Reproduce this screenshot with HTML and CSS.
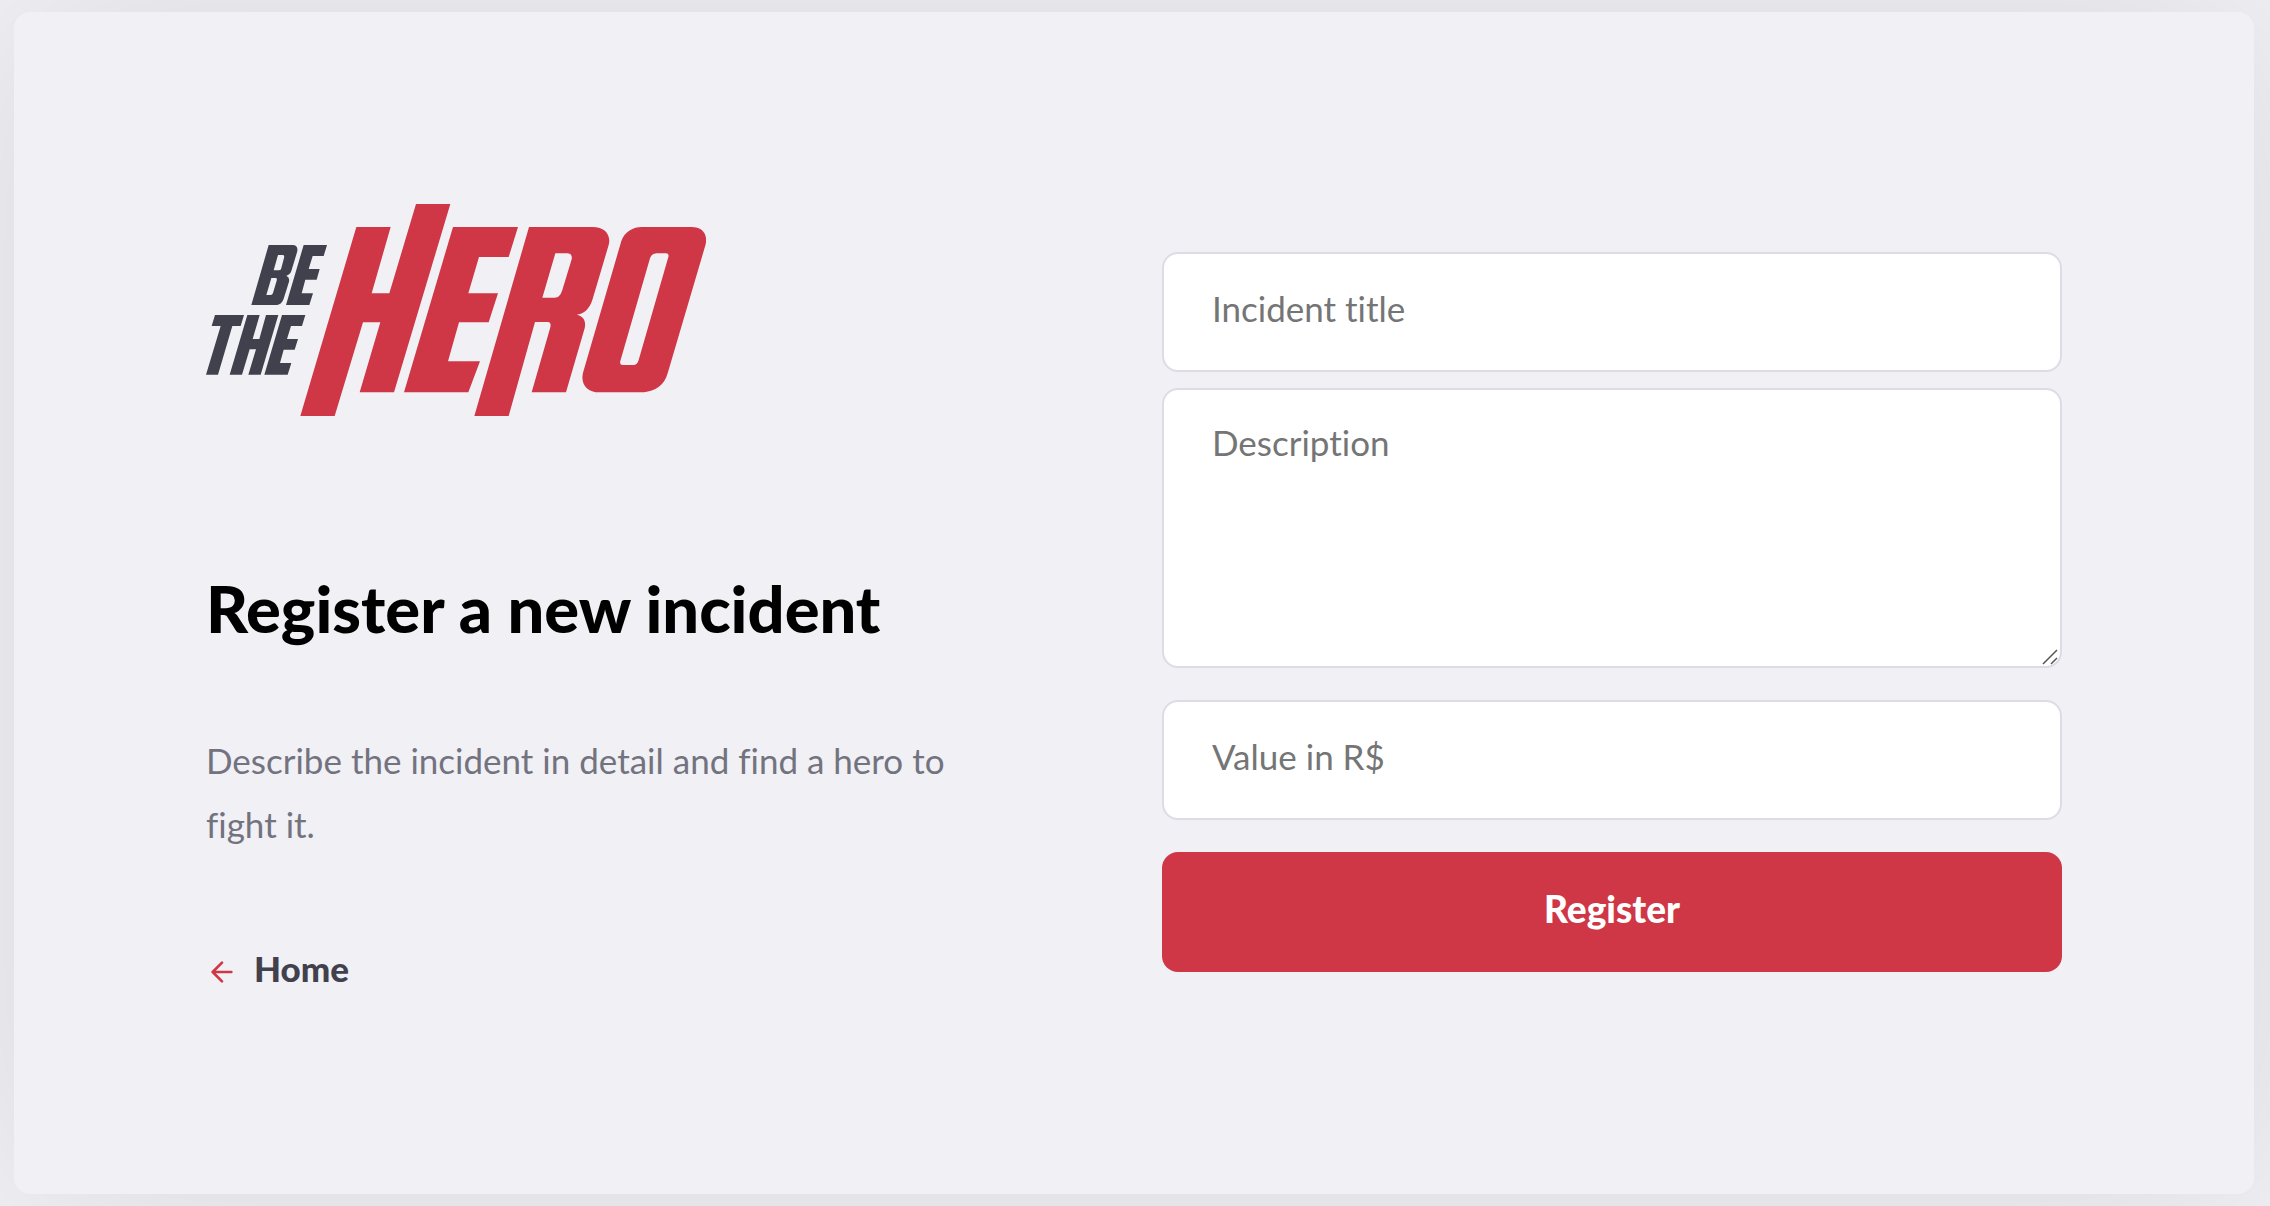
FILE: index.html
```html
<!DOCTYPE html>
<html lang="en">
<head>
<meta charset="utf-8">
<meta name="viewport" content="width=device-width, initial-scale=1">
<title>Be The Hero</title>
<link rel="stylesheet" href="styles.css">
</head>
<body>
<main class="card">
  <section class="intro">
    <svg class="logo" viewBox="48 42 1500 636" role="img" aria-label="Be The Hero">
      <g fill="#41414d" fill-rule="evenodd">
        <path d="M236 165H308C320 165 325 175 321 187L304 243Q300 254 289 257Q300 262 297 275L281 326C276 340 268 345 256 345H184ZM264 195L251 241H266Q271 241 273 238L282 204Q284 197 280 195ZM244 264L229 315H242Q247 315 249 309L260 272Q262 266 258 264Z"/>
        <path d="M341 165H411L401 198H368L356 237H389L380 269H346L335 310H369L358 345H288Z"/>
        <path d="M75 375H162L152 408H127L84 554H48L92 408H65Z"/>
        <path d="M172 375H209L188 447H208L228 375H265L212 554H175L198 478H179L156 554H119Z"/>
        <path d="M276 375H346L336 408H303L291 447H324L314 479H281L270 519H304L293 554H223Z"/>
      </g>
      <g fill="#cf3746" fill-rule="evenodd">
        <path d="M499 111H602L545 310H598L678 42H781L612 607H509L571 397H519L434 678H331Z"/>
        <path d="M789 111H984L956 201H867L835 310H924L896 397H807L774 514H870L835 607H642Z"/>
        <path d="M1017 111H1208C1245 111 1264 135 1256 165L1208 327C1198 360 1180 372 1160 374C1180 378 1189 392 1184 415L1128 607H1025L1081 412C1083 402 1081 396 1073 396H1035L956 678H853ZM1096 190L1057 323H1094C1105 323 1112 316 1117 300L1145 208C1147 197 1143 190 1131 190Z"/>
        <path d="M1355 111H1504C1540 111 1553 135 1547 163L1433 550C1422 588 1395 603 1362 607H1228C1190 607 1171 580 1179 548L1294 153C1304 125 1330 111 1355 111ZM1400 190Q1384 190 1380 205L1291 513Q1288 525 1298 525H1330Q1342 525 1346 510L1435 201Q1438 190 1428 190Z"/>
      </g>
    </svg>
    <h1>Register a new incident</h1>
    <p>Describe the incident in detail and find a hero to fight it.</p>
    <a class="back" href="#">
      <svg class="arrow" viewBox="0 0 24 24" fill="none" stroke="#cf3746" stroke-width="2" stroke-linecap="round" stroke-linejoin="round" aria-hidden="true"><path d="M19 12H5M12 19l-7-7 7-7"/></svg>
      Home
    </a>
  </section>
  <form class="form">
    <input class="field" type="text" placeholder="Incident title" aria-label="Incident title">
    <div class="area">
      <textarea class="field" placeholder="Description" aria-label="Description"></textarea>
      <svg class="grip" viewBox="0 0 16 16" aria-hidden="true"><path d="M1 15L15 1M9 15L15 9" stroke="#555" stroke-width="1.5"/></svg>
    </div>
    <input class="field" type="text" placeholder="Value in R$" aria-label="Value in R$">
    <button type="submit">Register</button>
  </form>
</main>
</body>
</html>
```
FILE: styles.css
```css
* {
  box-sizing: border-box;
  margin: 0;
  padding: 0;
}

body {
  min-height: 100vh;
  padding: 12px 16px 12px 14px;
  background: #f0f0f5;
  font: 400 35px Lato, sans-serif;
  font-variant-ligatures: none;
  overflow-x: hidden;
}

.card {
  display: flex;
  justify-content: space-between;
  align-items: center;
  gap: 64px;
  max-width: 2240px;
  margin: 0 auto;
  padding: 192px;
  border-radius: 16px;
  background: #f0f0f5;
  box-shadow: 0 0 200px rgba(0, 0, 0, 0.1);
}

.intro {
  flex: 0 1 760px;
}

.logo {
  display: block;
  width: 500px;
  max-width: 100%;
}

h1 {
  margin: 140px 0 68px;
  font-size: 65px;
  font-weight: 900;
  line-height: 104px;
  color: #000;
}

p {
  color: #737380;
  line-height: 64px;
}

.back {
  display: flex;
  align-items: center;
  gap: 16px;
  width: fit-content;
  margin-top: 84px;
  padding-bottom: 6px;
  color: #41414d;
  font-weight: 900;
  line-height: 56px;
  text-decoration: none;
}

.arrow {
  width: 32px;
  height: 32px;
  margin-top: 8px;
}

.form {
  display: flex;
  flex: 0 1 900px;
  flex-direction: column;
  padding-top: 18px;
}

.field {
  display: block;
  width: 100%;
  height: 120px;
  padding: 0 48px 8px;
  border: 2px solid #dcdce6;
  border-radius: 16px;
  background: #fff;
  color: #333;
  font: inherit;
  font-variant-ligatures: none;
}

.field::placeholder {
  color: #757575;
  opacity: 1;
}

.area {
  position: relative;
  margin: 16px 0 32px;
}

textarea.field {
  height: 280px;
  padding: 30px 48px;
  line-height: 44px;
  resize: vertical;
}

textarea::-webkit-resizer {
  background: transparent;
}

.grip {
  position: absolute;
  right: 4px;
  bottom: 3px;
  width: 16px;
  height: 16px;
  pointer-events: none;
}

button {
  height: 120px;
  margin-top: 32px;
  padding-bottom: 8px;
  border: 0;
  border-radius: 16px;
  background: #cf3746;
  color: #fff;
  font: inherit;
  font-size: 37px;
  font-weight: 900;
  cursor: pointer;
}
```
